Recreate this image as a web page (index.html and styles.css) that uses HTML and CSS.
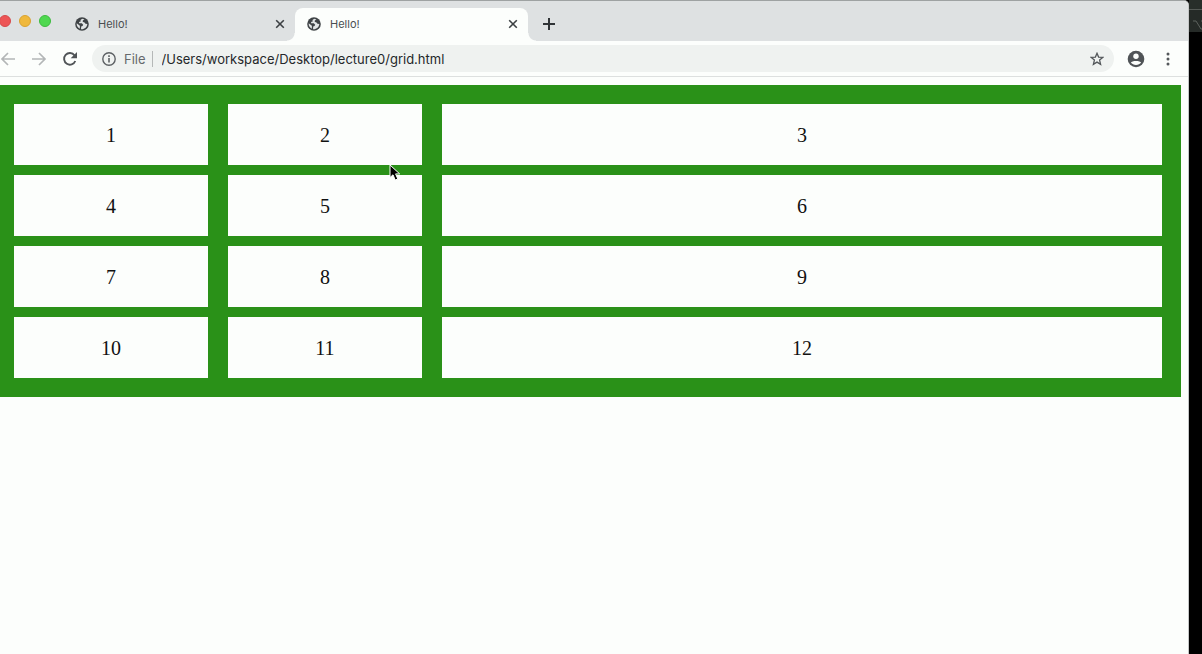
FILE: index.html
```html
<!DOCTYPE html>
<html lang="en">
<head>
<meta charset="utf-8">
<title>Hello!</title>
<link rel="stylesheet" href="styles.css">
</head>
<body>
<svg class="symbols" aria-hidden="true">
  <symbol id="globe" viewBox="0 0 14 14">
    <circle cx="7" cy="7" r="6.8" fill="#3f4346"/>
    <path d="M7.2 1.8 5.5 3.1 5.7 4.5 4 5.1 4.2 6.2 6.8 6.3 8.2 7.8 7.5 9 6.2 9.5 6 12.2C9.2 12.6 12.2 10.2 12.3 7L10.5 6.8 9.2 5.2 7.8 5 7.8 3.6 9.5 2.5Z" fill="#e1e4e5"/>
    <path d="M1.7 6.3 4.9 8.8 4.8 11.7C2.8 10.8 1.4 8.8 1.7 6.3Z" fill="#e1e4e5"/>
  </symbol>
  <symbol id="close" viewBox="0 0 10 10">
    <path d="M1.2 1.2 8.8 8.8M8.8 1.2 1.2 8.8" fill="none" stroke="#3c4043" stroke-width="1.6"/>
  </symbol>
</svg>
<div class="desktop">
  <main class="window">
    <header class="tabstrip">
      <div class="lights">
        <button class="light red" aria-label="Close window"></button>
        <button class="light yellow" aria-label="Minimize"></button>
        <button class="light green" aria-label="Zoom"></button>
      </div>
      <div class="tab">
        <svg class="favicon"><use href="#globe"/></svg>
        <span class="tab-title">Hello!</span>
        <button class="icon-button" aria-label="Close tab"><svg class="close"><use href="#close"/></svg></button>
      </div>
      <div class="tab active">
        <svg class="favicon"><use href="#globe"/></svg>
        <span class="tab-title">Hello!</span>
        <button class="icon-button" aria-label="Close tab"><svg class="close"><use href="#close"/></svg></button>
      </div>
      <button class="icon-button new-tab" aria-label="New tab">
        <svg width="12" height="12" viewBox="0 0 12 12"><path d="M6 0V12M0 6H12" stroke="#303437" stroke-width="2"/></svg>
      </button>
    </header>
    <nav class="toolbar">
      <div class="nav-buttons">
        <button class="icon-button" aria-label="Back">
          <svg width="16" height="16" viewBox="0 0 16 16"><path d="M15 8H2.500M8 2 2 8 8 14" fill="none" stroke="#b3b6b7" stroke-width="1.700"/></svg>
        </button>
        <button class="icon-button" aria-label="Forward">
          <svg width="16" height="16" viewBox="0 0 16 16"><path d="M1 8H13.500M8 2 14 8 8 14" fill="none" stroke="#b3b6b7" stroke-width="1.700"/></svg>
        </button>
        <button class="icon-button" aria-label="Reload">
          <svg width="16" height="16" viewBox="0 0 16 16"><path d="M13.300 10A5.800 5.800 0 1 1 12.500 4.300L13.200 5.200" fill="none" stroke="#505457" stroke-width="1.900"/><path d="M15 1V7.300H8.700Z" fill="#505457"/></svg>
        </button>
      </div>
      <div class="omnibox">
        <svg width="14" height="14" viewBox="0 0 14 14"><circle cx="7" cy="7" r="6.200" fill="none" stroke="#5d6164" stroke-width="1.400"/><path d="M7 6V10.500M7 3.300V4.900" stroke="#5d6164" stroke-width="1.600"/></svg>
        <span class="scheme">File</span>
        <input class="url" type="text" aria-label="Address" value="/Users/workspace/Desktop/lecture0/grid.html">
        <button class="icon-button" aria-label="Bookmark">
          <svg width="14" height="14" viewBox="0 0 14 14"><path d="M7 1.300 8.600 5.100 12.700 5.400 9.600 8.100 10.600 12.300 7 10.100 3.400 12.300 4.400 8.100 1.300 5.400 5.400 5.100Z" fill="none" stroke="#54585b" stroke-width="1.300"/></svg>
        </button>
      </div>
      <button class="icon-button" aria-label="Profile">
        <svg width="18" height="18" viewBox="0 0 18 18"><circle cx="9" cy="9" r="8.300" fill="#505457"/><circle cx="9" cy="6.200" r="2.700" fill="#fcfefc"/><path d="M3.900 12.600C4.600 10.300 13.400 10.300 14.100 12.600 12 15.700 6 15.700 3.900 12.600Z" fill="#fcfefc"/></svg>
      </button>
      <button class="icon-button" aria-label="Menu">
        <svg width="4" height="14" viewBox="0 0 4 14" fill="#54585b"><circle cx="2" cy="2" r="1.500"/><circle cx="2" cy="7" r="1.500"/><circle cx="2" cy="12" r="1.500"/></svg>
      </button>
    </nav>
    <section class="page">
      <div class="grid">
        <div class="cell">1</div>
        <div class="cell">2</div>
        <div class="cell">3</div>
        <div class="cell">4</div>
        <div class="cell">5</div>
        <div class="cell">6</div>
        <div class="cell">7</div>
        <div class="cell">8</div>
        <div class="cell">9</div>
        <div class="cell">10</div>
        <div class="cell">11</div>
        <div class="cell">12</div>
      </div>
    </section>
  </main>
  <aside class="backdrop">
    <div class="backdrop-bar"></div>
    <div class="backdrop-panel">
      <svg width="12" height="12" viewBox="0 0 12 12"><path d="M0 2H3L8 10H12M8 2H12" fill="none" stroke="#5d625e" stroke-width="1"/></svg>
    </div>
  </aside>
</div>
<svg class="cursor" width="12" height="18" viewBox="0 0 12 18"><path d="M1 1V13.500L4 10.800 6.200 16 8.800 15 6.600 9.900H10.700Z" fill="#000" stroke="#fff" stroke-width="1"/></svg>
</body>
</html>
```
FILE: styles.css
```css
* {
  box-sizing: border-box;
}

body {
  margin: 0;
  background: #000;
  font-family: Inter, "Liberation Sans", sans-serif;
}

.symbols {
  position: absolute;
  width: 0;
  height: 0;
}

.desktop {
  display: flex;
  min-height: 100vh;
}

.window {
  flex: 1;
  min-width: 0;
  background: #fcfefc;
  border-top: 1px solid #9ea2a2;
  border-right: 1px solid #c4c6c6;
  border-top-right-radius: 5px;
  overflow: hidden;
}

.icon-button {
  display: flex;
  padding: 0;
  border: 0;
  background: none;
}

.tabstrip {
  display: flex;
  align-items: flex-end;
  height: 40px;
  background: #dee1e2;
}

.lights {
  display: flex;
  align-self: center;
  gap: 8px;
  width: 63px;
  margin-left: -1px;
  padding-bottom: 1px;
}

.light {
  width: 12px;
  height: 12px;
  padding: 0;
  border: 1px solid;
  border-radius: 50%;
}

.red {
  background: #ed5556;
  border-color: #d54a4a;
}

.yellow {
  background: #efb83c;
  border-color: #d9a230;
}

.green {
  background: #4fd850;
  border-color: #3dbb3f;
}

.tab {
  position: relative;
  display: flex;
  align-items: center;
  width: 233px;
  height: 33px;
  padding: 0 10px 1px 13px;
  border-radius: 8px 8px 0 0;
}

.tab.active {
  padding-left: 12px;
  background: #fcfefc;
}

.tab.active::before,
.tab.active::after {
  content: "";
  position: absolute;
  bottom: 0;
  width: 8px;
  height: 8px;
}

.tab.active::before {
  right: 100%;
  background: radial-gradient(circle at 0 0, #dee1e2 7px, #fcfefc 8px);
}

.tab.active::after {
  left: 100%;
  background: radial-gradient(circle at 100% 0, #dee1e2 7px, #fcfefc 8px);
}

.favicon {
  width: 14px;
  height: 14px;
}

.tab-title {
  flex: 1;
  padding-left: 9px;
  color: #4a4e51;
  font-size: 11px;
  line-height: 16px;
}

.close {
  width: 10px;
  height: 10px;
}

.new-tab {
  margin-left: 15px;
  padding-bottom: 11px;
}

.toolbar {
  display: flex;
  align-items: center;
  gap: 21px;
  height: 36px;
  padding-right: 18px;
  border-bottom: 1px solid #dde0df;
}

.toolbar > .omnibox {
  margin-right: -8px;
}

.nav-buttons {
  display: flex;
  gap: 15px;
  margin-right: -7px;
}

.omnibox {
  flex: 1;
  display: flex;
  align-items: center;
  height: 27px;
  padding: 0 10px;
  border-radius: 14px;
  background: #eff2f0;
}

.scheme {
  margin-left: 8px;
  padding-right: 6px;
  border-right: 1px solid #b5b8b7;
  color: #66696c;
  font-size: 13px;
  line-height: 16px;
}

.url {
  flex: 1;
  min-width: 0;
  padding: 0 9px;
  border: 0;
  background: none;
  color: #25282a;
  font: 13px/16px Inter, "Liberation Sans", sans-serif;
}

.page {
  padding: 8px 7px 8px 0;
}

.grid {
  display: grid;
  grid-template-columns: 194px 194px 1fr;
  gap: 10px 20px;
  padding: 19px 19px 19px 14px;
  background: #2a9118;
}

.cell {
  padding: 20px 19px 18px;
  background: #fcfefc;
  color: #111;
  font: 20px/23px "Liberation Serif", serif;
  text-align: center;
}

.backdrop {
  width: 13px;
  background: #000;
}

.backdrop-bar {
  height: 10px;
  border-bottom: 1px solid #555a56;
  background: #282e2a;
}

.backdrop-panel {
  height: 22px;
  padding: 5px 0 0 4px;
  overflow: hidden;
  background: #252a27;
}

.cursor {
  position: absolute;
  left: 389px;
  top: 164px;
}
```
